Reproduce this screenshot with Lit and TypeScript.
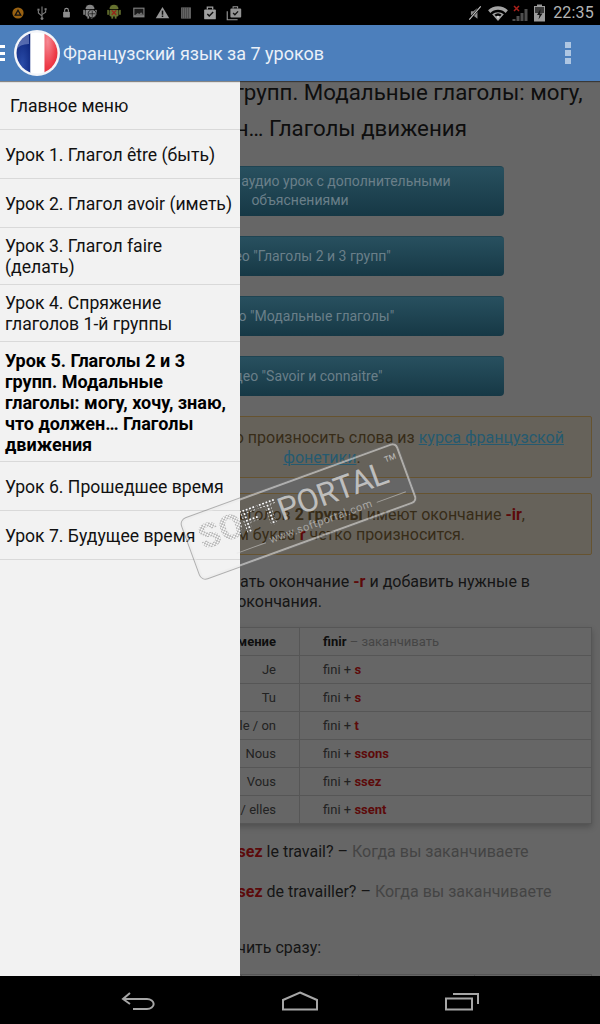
import { LitElement, html, css, svg } from "lit";
import { customElement } from "lit/decorators.js";

const ic = (w: number, h: number, body: unknown, rw = w, rh = h) =>
  html`<svg class="ic" width=${rw} height=${rh} viewBox="0 0 ${w} ${h}">${body}</svg>`;

const android = (fill: string, extra: unknown) => svg`
  <path d="M6 6.500a6 5.500 0 0 1 12 0z" fill=${fill}/>
  <path d="M8 2l1.500 2M16 2l-1.500 2" stroke=${fill} stroke-width="1"/>
  <rect x="6" y="7.500" width="12" height="9" rx="1.500" fill=${fill}/>
  <rect x="3" y="7.500" width="2.200" height="7" rx="1" fill=${fill}/>
  <rect x="18.800" y="7.500" width="2.200" height="7" rx="1" fill=${fill}/>
  <rect x="8.500" y="16" width="2.400" height="3.500" fill=${fill}/>
  <rect x="13" y="16" width="2.400" height="3.500" fill=${fill}/>
  ${extra}`;

const leftIcons = [
  ic(20, 20, svg`<circle cx="10" cy="10" r="8" fill="#9a6212"/><path d="M10 6l4 7H6z" fill="none" stroke="#111" stroke-width="1.800"/>`, 14, 14),
  ic(20, 20, svg`<path d="M10 2v15M10 14L5.500 10V7M10 12l4.500-3V6.500" fill="none" stroke="#7c7c7c" stroke-width="1.400"/><rect x="4.300" y="4.600" width="2.600" height="2.600" fill="#7c7c7c"/><rect x="13.200" y="4" width="2.600" height="2.600" fill="#7c7c7c"/><circle cx="10" cy="17" r="1.800" fill="#7c7c7c"/>`, 16, 16),
  ic(20, 20, svg`<rect x="5.500" y="9" width="9" height="7.500" rx="1" fill="#8e8e8e"/><path d="M7.500 9V7a2.500 2.500 0 0 1 5 0v2" fill="none" stroke="#8e8e8e" stroke-width="1.500"/>`, 15, 15),
  ic(24, 22, android("#858585", svg`<circle cx="15" cy="13" r="5.500" fill="#858585" stroke="#000" stroke-width="1"/><path d="M15 9v8M11 13h8" stroke="#000" stroke-width=".8"/>`), 18, 16.5),
  ic(24, 22, android("#66722f", svg`<path d="M9 8.500l6 6M15 8.500l-6 6" stroke="#9c2019" stroke-width="1.800"/>`), 18, 16.5),
  ic(20, 20, svg`<rect x="3" y="3.500" width="15" height="13" fill="#808080"/><rect x="4.500" y="5" width="12" height="8.500" fill="#1a1a1a"/><path d="M5 13.500l4-3 2 1.500 2.500-2.500 3 3.500z" fill="#6e6e6e"/>`, 15, 15),
  ic(20, 20, svg`<path d="M10 2.500L19 17.500H1z" fill="#969696"/><rect x="9" y="7.500" width="2" height="5.500" fill="#111"/><rect x="9" y="14" width="2" height="2" fill="#111"/>`, 15, 15),
  ic(20, 20, svg`<path d="M4 3h12v14H4z" fill="#767676"/><path d="M6 3v14M8.500 3v14M11 3v14M13.500 3v14" stroke="#2c2c2c" stroke-width="1"/>`, 16, 16),
  ic(20, 20, svg`<path d="M7 6V3.500h6V6" fill="none" stroke="#a0a0a0" stroke-width="1.400"/><rect x="3.500" y="6" width="13" height="11" rx="1" fill="#a0a0a0"/><path d="M7 11l2.200 2.200L13.500 8.800" fill="none" stroke="#111" stroke-width="1.600"/>`, 18, 18),
  ic(20, 20, svg`<path d="M9 5V3h5v2" fill="none" stroke="#949494" stroke-width="1.200"/><rect x="6" y="5" width="12" height="10" rx="1" fill="#949494"/><path d="M2.500 8v9.500H14" fill="none" stroke="#949494" stroke-width="1.300"/><path d="M9 10l2 2 3.500-3.800" fill="none" stroke="#111" stroke-width="1.500"/>`, 18, 18),
];

const backIcon = html`<svg width="34" height="20" viewBox="0 0 34 20"><path d="M9 2L2 8l7 5M2 8h24a6 4.500 0 0 1 0 10H12" fill="none" stroke="#a6a6a6" stroke-width="2"/></svg>`;
const homeIcon = html`<svg width="38" height="20" viewBox="0 0 38 20"><path d="M19 1.500L36 9v9.500H2V9z" fill="none" stroke="#a6a6a6" stroke-width="2"/></svg>`;
const recentIcon = html`<svg width="36" height="20" viewBox="0 0 36 20"><path d="M9 3h25v10" fill="none" stroke="#a6a6a6" stroke-width="2"/><rect x="2" y="7.500" width="26" height="11" fill="none" stroke="#a6a6a6" stroke-width="2"/></svg>`;

const menu = [
  ["Урок 1. Глагол être (быть)"],
  ["Урок 2. Глагол avoir (иметь)"],
  ["Урок 3. Глагол faire", "(делать)"],
  ["Урок 4. Спряжение", "глаголов 1-й группы"],
  ["Урок 5. Глаголы 2 и 3", "групп. Модальные", "глаголы: могу, хочу, знаю,", "что должен… Глаголы", "движения"],
  ["Урок 6. Прошедшее время"],
  ["Урок 7. Будущее время"],
];

const rows = [
  ["Je", "s"],
  ["Tu", "s"],
  ["Il / elle / on", "t"],
  ["Nous", "ssons"],
  ["Vous", "ssez"],
  ["Ils / elles", "ssent"],
];

@customElement("app-root")
export class AppRoot extends LitElement {
  static styles = css`
    :host { display: block; width: 600px; height: 1024px; font-family: Roboto, "Noto Sans", sans-serif; overflow: hidden; }
    .screen { display: flex; flex-direction: column; height: 1024px; position: relative; background: #000; }
    .ic { display: block; flex: none; }

    .status { height: 25px; flex: none; background: #000; display: flex; align-items: center; justify-content: space-between; padding: 0 6px 0 6px; }
    .status-left { display: flex; align-items: center; }
    .slot { width: 24px; display: flex; justify-content: center; }
    .status-right { display: flex; align-items: center; gap: 3px; }
    .time { color: #b4b4b4; font-size: 16px; margin-left: 3px; letter-spacing: .2px; }

    .appbar { height: 56px; flex: none; background: #4c7fbc; display: flex; align-items: center; position: relative; z-index: 3; box-shadow: 0 1px 1px rgba(0,0,0,.45); }
    .burger { width: 5px; height: 16px; margin-right: 9px; display: flex; flex-direction: column; justify-content: space-between; }
    .burger i { display: block; height: 3px; background: #fff; }
    .flag { flex: none; margin-right: 3px; }
    .title { flex: 1; color: #eaf0f8; font-size: 18px; white-space: nowrap; }
    .dots { display: flex; flex-direction: column; gap: 2px; margin-right: 29px; }
    .dots i { display: block; width: 6px; height: 6px; background: #aec6e2; }

    .main { flex: 1; position: relative; overflow: hidden; background: #666; }
    .page { padding: 0 8px; font-size: 16px; line-height: 20px; color: #151515; }
    h1 { margin: -7px 0 20px; font-size: 22.3px; line-height: 36px; font-weight: 400; color: #0e0e0e; white-space: nowrap; }
    .btn { display: block; width: 408px; height: 40px; margin: 0 auto 20px; box-sizing: border-box; padding: 10px 12px 0; text-align: center; font-size: 14px; line-height: 19px; color: #6a7f89; border-radius: 4px; background: linear-gradient(#28505f, #163845); border-top: 1px solid #1f4452; }
    .btn.two { height: 50px; padding-top: 5px; }
    .alert { background: #66625a; border: 1px solid #665330; border-radius: 2px; color: #372c18; padding: 11px 15px 0; height: 62px; box-sizing: border-box; white-space: nowrap; }
    .first-alert { margin: 20px 0 15px; text-align: center; padding-left: 59px; }
    a { color: #255a70; text-decoration: underline; }
    .end { text-align: right; white-space: nowrap; }
    .alert-a { padding-right: 51px; }
    .alert-b { padding-right: 111px; }
    .para { margin: 17px 0 15px; }
    .para-a { padding-right: 62px; }
    .para-b { padding-right: 270px; }
    b.r { color: #5c0a0a; }

    table { width: 584px; border-collapse: collapse; font-size: 13px; line-height: 17px; color: #222; box-shadow: 0 3px 6px rgba(0,0,0,.22); table-layout: fixed; }
    td, th { border: 1px solid #565656; height: 28px; padding: 0 23px; box-sizing: border-box; font-weight: 400; text-align: left; }
    td.who, th.who { text-align: right; }
    th.who { width: 291px; }
    th { font-weight: 700; color: #0e0e0e; }
    .tr { color: #454545; font-weight: 400; }
    .sent { margin: 18px 0 0; }
    .sent p { margin: 0; padding-left: 34px; white-space: nowrap; }
    .sent .tr { color: #444; }
    .now { margin: 16px 0 16px; padding-left: 128px; }
    .t2 { box-shadow: none; }
    .t2 td { padding: 0; }

    .drawer { position: absolute; left: 0; top: 0; bottom: 0; width: 240px; background: #f2f2f2; color: #111; font-size: 17.6px; line-height: 21px; z-index: 2; }
    .drawer > div { padding: 8px 5px 6px; border-bottom: 1px solid #d9d9d9; display: flex; align-items: center; box-sizing: border-box; min-height: 49px; white-space: nowrap; }
    .drawer .head { padding-left: 10px; }
    .drawer .on { font-weight: 700; color: #000; font-size: 18px; }

    .nav { height: 48px; flex: none; background: #000; display: flex; align-items: center; justify-content: center; padding-top: 1px; box-sizing: border-box; }
    .nav-in { display: grid; grid-template-columns: repeat(3, 162px); justify-items: center; margin-left: -1px; }

    .mark { position: absolute; left: 184px; top: 479px; width: 230px; height: 64px; box-sizing: border-box; transform: rotate(-20deg); border: 2px solid rgba(235,235,235,.55); outline: 1px solid rgba(110,110,110,.5); border-radius: 6px; z-index: 5; padding: 2px 6px 0 10px; color: rgba(228,228,228,.72); pointer-events: none; display: flex; flex-direction: column; }
    .mark-top { display: flex; align-items: baseline; height: 40px; line-height: 40px; }
    .soft { font-size: 34.5px; font-weight: 900; width: 84px; flex: none; color: transparent; background-image: radial-gradient(circle, rgba(250,250,250,1) .95px, rgba(105,105,105,.6) 1.3px, transparent 1.6px); background-size: 3.5px 3.5px; -webkit-background-clip: text; background-clip: text; }
    .portal { font-size: 32px; font-weight: 400; letter-spacing: -.3px; text-shadow: 0 0 1px rgba(90,90,90,.5); }
    .tm { font-size: 8px; align-self: flex-start; line-height: 20px; margin-left: 2px; }
    .mark-bot { display: flex; align-items: center; gap: 5px; font-size: 11px; line-height: 12px; padding-left: 30px; letter-spacing: .5px; color: rgba(205,205,205,.65); }
    .mark-bot i { flex: 1; height: 1px; background: rgba(225,225,225,.5); }
  `;

  render() {
    return html`<div class="screen">
      <div class="status">
        <div class="status-left">${leftIcons.map((i) => html`<span class="slot">${i}</span>`)}</div>
        <div class="status-right">
          ${ic(22, 22, svg`<path d="M6 9h3l5-4v13l-5-4H6z" fill="#8f8f8f"/><path d="M4 19L18 3" stroke="#000" stroke-width="3"/><path d="M4 19L18 3" stroke="#c8c8c8" stroke-width="1.300"/>`, 18, 18)}
          ${ic(24, 20, svg`<path d="M1 7a16 16 0 0 1 22 0l-2.500 3a12 12 0 0 0-17 0z" fill="#a4a4a4"/><path d="M5.500 11.500a10 10 0 0 1 13 0L12 19z" fill="#a4a4a4"/><path d="M8 12a6 6 0 0 1 8 0l-4 4z" fill="#000"/><path d="M9.800 14a3.500 3.500 0 0 1 4.400 0L12 17z" fill="#d0d0d0"/>`, 22, 18)}
          ${ic(18, 20, svg`<path d="M12.500 18V6h3v12zM8.500 18v-8h3v8zM4.500 18v-5h3v5zM.5 18v-2h3v2z" fill="#4e4e4e"/><path d="M2 3l5 5M7 3L2 8" stroke="#a8201a" stroke-width="1.500"/>`)}
          ${ic(14, 20, svg`<rect x="4" y="1.500" width="5" height="2" fill="#9a9a9a"/><rect x="1" y="3" width="11" height="15.500" fill="#9c9c9c"/><rect x="2" y="4" width="9" height="6" fill="#3a3a3a"/><path d="M7.500 6L4 12h2.500L5.500 16.500 9.500 10.500H7z" fill="#111"/>`)}
          <span class="time">22:35</span>
        </div>
      </div>

      <div class="appbar">
        <div class="burger"><i></i><i></i><i></i></div>
        <svg class="flag" width="46" height="46" viewBox="0 0 46 46">
          <defs>
            <clipPath id="c"><circle cx="23" cy="23" r="20.500"/></clipPath>
            <radialGradient id="b" cx=".5" cy=".75" r=".8"><stop offset="0" stop-color="#2a4ca8"/><stop offset="1" stop-color="#071d73"/></radialGradient>
            <radialGradient id="r" cx=".2" cy=".25" r=".9"><stop offset="0" stop-color="#f58a94"/><stop offset=".6" stop-color="#ee3b48"/><stop offset="1" stop-color="#d8202c"/></radialGradient>
          </defs>
          <circle cx="23" cy="23" r="23" fill="#f3f5f9"/>
          <g clip-path="url(#c)">
            <rect x="0" y="0" width="16.500" height="46" fill="url(#b)"/>
            <rect x="16.500" y="0" width="14" height="46" fill="#fff"/>
            <rect x="30.500" y="0" width="16" height="46" fill="url(#r)"/>
            <path d="M2 20a21 18 0 0 1 13-16v10a14 10 0 0 0-13 6z" fill="#8a9bd0" opacity=".55"/>
          </g>
        </svg>
        <div class="title">Французский язык за 7 уроков</div>
        <div class="dots"><i></i><i></i><i></i></div>
      </div>

      <div class="main">
        <div class="page">
          <h1>Урок 5. Глаголы 2 и 3 групп. Модальные глаголы: могу,<br />хочу, знаю, что должен… Глаголы движения</h1>
          <span class="btn two">Прослушайте аудио урок с дополнительными<br />объяснениями</span>
          <span class="btn">Видео "Глаголы 2 и 3 групп"</span>
          <span class="btn">Видео "Модальные глаголы"</span>
          <span class="btn">Видео "Savoir и connaitre"</span>
          <div class="alert first-alert">Научитесь правильно произносить слова из <a>курса французской<br />фонетики</a>.</div>
          <div class="alert">
            <div class="end alert-a">Большинство глаголов <b>2 группы</b> имеют окончание <b class="r">-ir</b>,</div>
            <div class="end alert-b">При этом буква <b class="r">r</b> четко произносится.</div>
          </div>
          <div class="para">
            <div class="end para-a">Нужно убрать окончание <b class="r">-r</b> и добавить нужные в</div>
            <div class="end para-b">зависимости от лица окончания.</div>
          </div>
          <table>
            <tr><th class="who">Местоимение</th><th>finir <span class="tr">– заканчивать</span></th></tr>
            ${rows.map((r) => html`<tr><td class="who">${r[0]}</td><td>fini + <b class="r">${r[1]}</b></td></tr>`)}
          </table>
          <div class="sent">
            <p>Quand est-ce que vous fini<b class="r">ssez</b> le travail? – <span class="tr">Когда вы заканчиваете</span><br />работу?</p>
            <p>Quand est-ce que vous fini<b class="r">ssez</b> de travailler? – <span class="tr">Когда вы заканчиваете</span><br />работать?</p>
          </div>
          <div class="now">Можно закончить сразу:</div>
          <table class="t2"><tr><td></td><td></td><td></td><td></td><td></td></tr></table>
        </div>

        <div class="drawer">
          <div class="head">Главное меню</div>
          ${menu.map((m, i) => html`<div class=${i === 4 ? "on" : ""}><span>${m.map((l, j) => html`${j ? html`<br />` : ""}${l}`)}</span></div>`)}
        </div>
      </div>

      <div class="nav"><div class="nav-in">${backIcon}${homeIcon}${recentIcon}</div></div>

      <div class="mark">
        <div class="mark-top"><span class="soft">SOFT</span><span class="portal">PORTAL</span><span class="tm">TM</span></div>
        <div class="mark-bot"><i></i><span>www.softportal.com</span><i></i></div>
      </div>
    </div>`;
  }
}
